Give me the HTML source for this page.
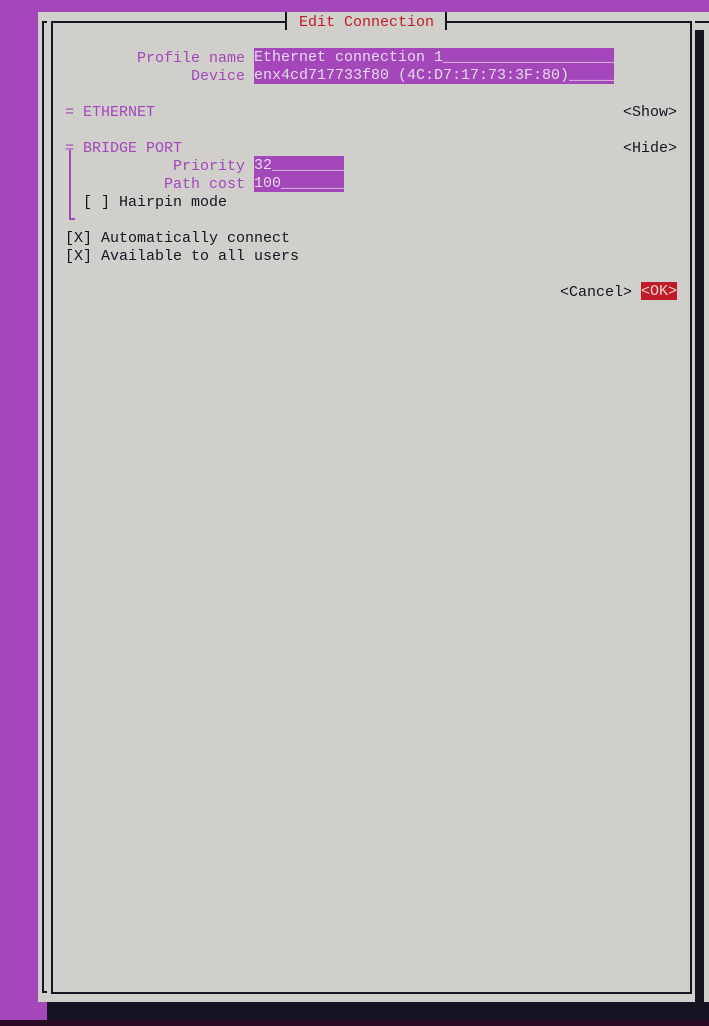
<!DOCTYPE html>
<html><head><meta charset="utf-8"><style>
html,body{margin:0;padding:0;}
body{width:709px;height:1026px;background:#a347ba;position:relative;overflow:hidden;font-family:"Liberation Mono",monospace;font-size:15px;}
.a{position:absolute;}
.t{position:absolute;height:18px;line-height:18px;white-space:pre;margin-top:2px;}
.f{margin-top:0;padding-top:2px;height:16px;line-height:16px;}
.p{color:#a347ba;}
.k{color:#171421;}
.f{background:#a347ba;color:#e6d9ea;}
</style></head><body>
<div class="a" style="left:38px;top:12px;width:671px;height:990px;background:#d0cfcc"></div>
<div class="a" style="left:47px;top:1002px;width:662px;height:18px;background:#171421"></div>
<div class="a" style="left:695px;top:30px;width:9px;height:990px;background:#171421"></div>
<div class="a" style="left:0;top:1020px;width:709px;height:6px;background:#2c0a25"></div>
<div class="a" style="left:42px;top:21px;width:5px;height:972px;border-left:2px solid #171421;border-top:2px solid #171421;border-bottom:2px solid #171421;box-sizing:border-box"></div>
<div class="a" style="left:695px;top:21px;width:14px;height:2px;background:#171421"></div>
<div class="a" style="left:51px;top:21px;width:641px;height:973px;border:2px solid #171421;box-sizing:border-box"></div>
<div class="a" style="left:285px;top:12px;width:162px;height:18px;background:#d0cfcc;border-left:2px solid #171421;border-right:2px solid #171421;box-sizing:border-box"></div>
<div class="t" style="left:299px;top:12px;color:#c01c28">Edit Connection</div>

<div class="t p" style="left:137px;top:48px">Profile name</div>
<div class="t f" style="left:254px;top:48px;width:360px">Ethernet connection 1___________________</div>
<div class="t p" style="left:191px;top:66px">Device</div>
<div class="t f" style="left:254px;top:66px;width:360px">enx4cd717733f80 (4C:D7:17:73:3F:80)_____</div>

<div class="t p" style="left:65px;top:102px">= ETHERNET</div>
<div class="t k" style="left:623px;top:102px">&lt;Show&gt;</div>

<div class="t p" style="left:65px;top:138px">=</div>
<div class="t p" style="left:83px;top:138px">BRIDGE PORT</div>
<div class="t k" style="left:623px;top:138px">&lt;Hide&gt;</div>
<div class="a" style="left:69px;top:150px;width:6px;height:70px;border-left:2px solid #a347ba;border-bottom:2px solid #a347ba;box-sizing:border-box"></div>
<div class="t p" style="left:173px;top:156px">Priority</div>
<div class="t f" style="left:254px;top:156px;width:90px">32________</div>
<div class="t p" style="left:164px;top:174px">Path cost</div>
<div class="t f" style="left:254px;top:174px;width:90px">100_______</div>
<div class="t k" style="left:83px;top:192px">[ ] Hairpin mode</div>

<div class="t k" style="left:65px;top:228px">[X] Automatically connect</div>
<div class="t k" style="left:65px;top:246px">[X] Available to all users</div>

<div class="t k" style="left:560px;top:282px">&lt;Cancel&gt;</div>
<div class="t f" style="left:641px;top:282px;width:36px;background:#c01c28;color:#f0d0d0">&lt;OK&gt;</div>
</body></html>
